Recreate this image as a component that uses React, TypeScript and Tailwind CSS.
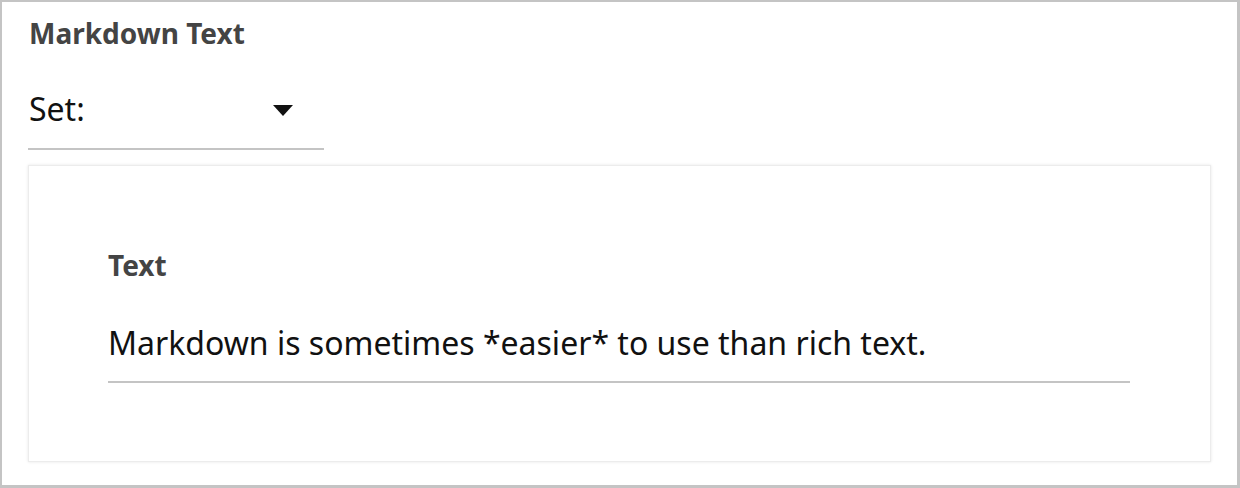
export default function App() {
  return (
    <div
      className="w-[1240px] h-[488px] bg-white border-t-2 border-l-2 border-r-[3px] border-b-[3px] border-[#c4c4c4] pl-[26px] pr-[26px] pt-[11px] overflow-hidden"
      style={{ fontFamily: '"Noto Sans", "Open Sans", sans-serif' }}
    >
      <div className="pl-[1px] text-[28px] leading-[40px] font-bold text-[#444444]">Markdown Text</div>
      <div className="mt-[34px] w-[296px] border-b-2 border-[#c4c4c4] pb-[17px] flex items-center justify-between pr-[31px]">
        <span className="pl-[1px] text-[32px] leading-[44px] text-[#111111]">Set:</span>
        <svg width="20" height="11" viewBox="0 0 20 11" className="mt-[3px]">
          <path d="M0 0 H20 L10 11 Z" fill="#111111" />
        </svg>
      </div>
      <div className="mt-[15px] w-[1183px] h-[297px] bg-white border border-[#ececec] shadow-[0_0_3px_rgba(0,0,0,0.1)] pt-[79px] pl-[79px] pr-[80px]">
        <div className="text-[28px] leading-[40px] font-bold text-[#444444]">Text</div>
        <div className="mt-[36px] border-b-2 border-[#c4c4c4] pb-[16px]">
          <div className="text-[32px] leading-[44px] text-[#111111]">
            Markdown is sometimes *easier* to use than rich text.
          </div>
        </div>
      </div>
    </div>
  );
}
